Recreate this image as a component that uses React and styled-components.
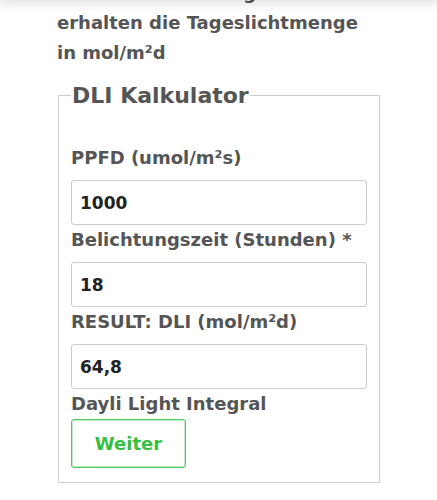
import styled, { createGlobalStyle } from 'styled-components';

const GlobalStyle = createGlobalStyle`
    body {
        margin: 0;
        background: #fff;
        font-family: "DejaVu Sans", "Open Sans", sans-serif;
    }
`;

export default function App() {
    return (
        <>
            <GlobalStyle />
            <TopBar />
            <Page>
                <Intro>
                    Mit diesem Tool ergibt sich<br />
                    erhalten die Tageslichtmenge<br />
                    in mol/m²d
                </Intro>
                <Calculator>
                    <Legend>DLI Kalkulator</Legend>
                    <Label>PPFD (umol/m²s)</Label>
                    <Field defaultValue="1000" />
                    <Label>Belichtungszeit (Stunden) *</Label>
                    <Field defaultValue="18" />
                    <Label>RESULT: DLI (mol/m²d)</Label>
                    <Field defaultValue="64,8" readOnly />
                    <Label $tight>Dayli Light Integral</Label>
                    <NextBtn type="button">Weiter</NextBtn>
                </Calculator>
            </Page>
        </>
    );
}

// header sits above the scrolled view, only its shadow reaches in
const TopBar = styled.div`
    position: fixed;
    left: 0;
    top: -20px;
    width: 100%;
    height: 20px;
    background: #fff;
    box-shadow: 0 3px 12px rgba(0, 0, 0, 0.14);
    z-index: 10;
`;

const Page = styled.div`
    padding: 0 0 0 57px;
    margin-top: -22px;
`;

const Intro = styled.p`
    margin: 0;
    font-size: 18px;
    font-weight: 700;
    line-height: 30px;
    color: #555;
`;

const Calculator = styled.fieldset`
    box-sizing: border-box;
    width: 322px;
    margin: 15px 0 0 1px;
    padding: 10px 12px 14px 12px;
    border: 1px solid #ccc;
    display: flex;
    flex-direction: column;
    align-items: flex-start;
`;

const Legend = styled.legend`
    padding: 0 1px;
    font-size: 22px;
    font-weight: 700;
    color: #555;
`;

const Label = styled.label`
    font-size: 18px;
    font-weight: 700;
    color: #555;
    line-height: 24px;
    margin: 3px 0 ${p => (p.$tight ? '3px' : '10px')};

    &:first-of-type {
        margin-top: 28px;
    }
`;

const Field = styled.input`
    box-sizing: border-box;
    width: 296px;
    height: 45px;
    padding: 0 8px;
    border: 1px solid #ccc;
    border-radius: 3px;
    font-family: inherit;
    font-size: 17px;
    font-weight: 700;
    color: #222;
    background: #fff;
    outline: none;
`;

const NextBtn = styled.button`
    appearance: none;
    box-sizing: border-box;
    width: 115px;
    height: 49px;
    padding: 0;
    border: 1px solid #4fc95c;
    box-shadow: inset 0 0 0 1px rgba(79, 201, 92, 0.35);
    border-radius: 3px;
    background: #fff;
    font-family: inherit;
    font-size: 18px;
    font-weight: 700;
    color: #35c042;
    cursor: pointer;
`;
